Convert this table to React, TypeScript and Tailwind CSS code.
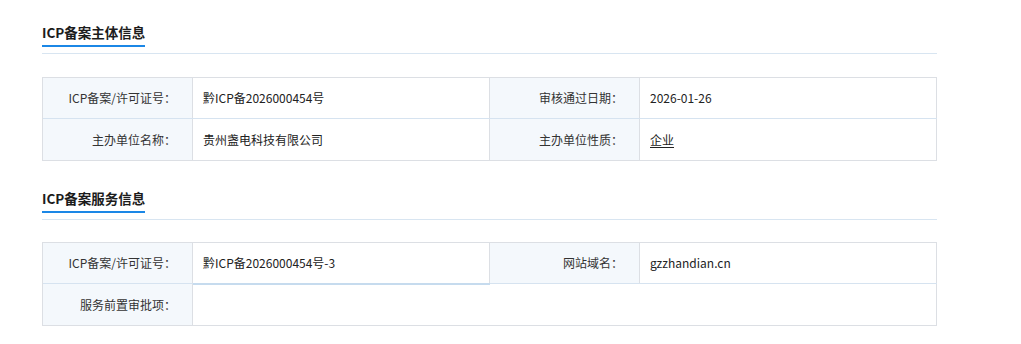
import type { ReactNode } from "react"

type Cell = { label: string; value?: ReactNode; link?: boolean }

const subjectRows: Cell[][] = [
  [
    { label: "ICP备案/许可证号：", value: "黔ICP备2026000454号" },
    { label: "审核通过日期：", value: "2026-01-26" },
  ],
  [
    { label: "主办单位名称：", value: "贵州盏电科技有限公司" },
    { label: "主办单位性质：", value: "企业", link: true },
  ],
]

function SectionTitle({ children }: { children: ReactNode }) {
  return (
    <div className="w-[895px] border-b border-[#d8e5f1] pb-[6px]">
      <span className="inline-block border-b-2 border-[#1b87e6] pb-[3px] text-[13.5px] leading-[20px] font-bold text-[#1c1c1c]">
        {children}
      </span>
    </div>
  )
}

function Label({ children }: { children: ReactNode }) {
  return (
    <div className="flex items-center justify-end border-r border-[#dcdfe4] bg-[#f4f8fc] pr-4 text-[12px] text-[#333]">
      {children}
    </div>
  )
}

function Value({ children, link }: { children?: ReactNode; link?: boolean }) {
  return (
    <div className="flex items-center border-r border-[#dcdfe4] pl-[10px] text-[12px] text-[#222]">
      {link ? <a className="underline underline-offset-2">{children}</a> : children}
    </div>
  )
}

export default function App() {
  return (
    <div
      className="min-h-[344px] bg-white pl-[42px] pt-[19px]"
      style={{ fontFamily: '"Noto Sans CJK SC", "Noto Sans", sans-serif' }}
    >
      <section>
        <SectionTitle>ICP备案主体信息</SectionTitle>
        <div className="mt-[23px] w-[895px] border-l border-t border-[#dcdfe4]">
          {subjectRows.map((row, i) => {
            const last = i === subjectRows.length - 1
            return (
              <div
                key={i}
                className={`grid grid-cols-[150px_297px_150px_297px] border-b ${
                  last ? "h-[42px] border-[#dcdfe4]" : "h-[41px] border-[#d6e3f0]"
                }`}
              >
                {row.map((c) => (
                  <>
                    <Label key={c.label}>{c.label}</Label>
                    <Value link={c.link}>{c.value}</Value>
                  </>
                ))}
              </div>
            )
          })}
        </div>
      </section>

      <section className="mt-[24px]">
        <SectionTitle>ICP备案服务信息</SectionTitle>
        <div className="mt-[22px] w-[895px] border-l border-t border-[#dcdfe4]">
          <div className="grid h-[41px] grid-cols-[150px_297px_150px_297px] border-b border-[#d6e3f0]">
            <Label>ICP备案/许可证号：</Label>
            <div className="relative flex items-center border-r border-[#dcdfe4] pl-[10px] text-[12px] text-[#222]">
              黔ICP备2026000454号-3
              <span className="absolute -bottom-[2px] left-0 right-[-1px] h-[2px] bg-[#c6dbee]" />
            </div>
            <Label>网站域名：</Label>
            <Value>gzzhandian.cn</Value>
          </div>
          <div className="grid h-[42px] grid-cols-[150px_744px] border-b border-[#dcdfe4]">
            <Label>服务前置审批项：</Label>
            <Value />
          </div>
        </div>
      </section>
    </div>
  )
}
